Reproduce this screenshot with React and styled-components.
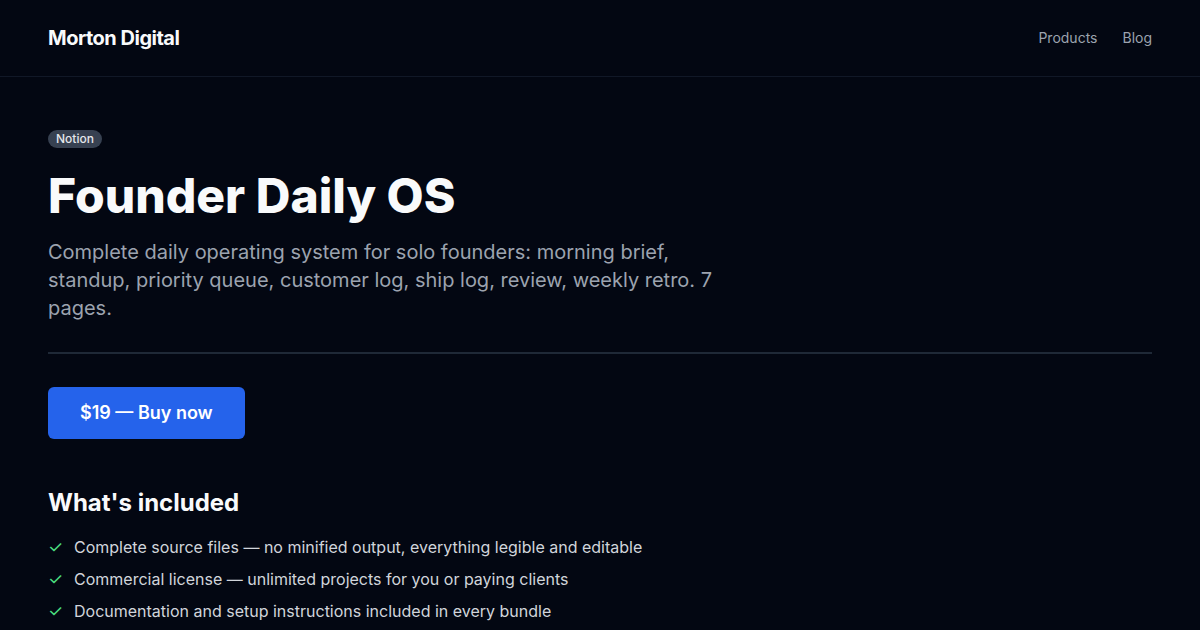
import styled, { createGlobalStyle } from "styled-components";

const GlobalStyle = createGlobalStyle`
  html, body {
    margin: 0;
    padding: 0;
    background: #030712;
  }
  body {
    font-family: Inter, "Noto Sans", sans-serif;
    color: #f9fafb;
    -webkit-font-smoothing: antialiased;
  }
  * {
    box-sizing: border-box;
  }
`;

const Page = styled.div`
  min-height: 100vh;
  background: #030712;
`;

const Header = styled.header`
  height: 77px;
  padding: 0 48px 1px;
  display: flex;
  align-items: center;
  justify-content: space-between;
  border-bottom: 1px solid #111827;
`;

const Logo = styled.a`
  font-size: 20px;
  font-weight: 700;
  letter-spacing: -0.5px;
  color: #f9fafb;
  text-decoration: none;
`;

const Nav = styled.nav`
  display: flex;
  gap: 25px;
`;

const NavLink = styled.a`
  font-size: 14px;
  color: #9ca3af;
  text-decoration: none;
`;

const Main = styled.main`
  padding: 50px 48px 0;
`;

const Badge = styled.span`
  display: inline-block;
  font-size: 12px;
  font-weight: 500;
  line-height: 18px;
  padding: 0 8px;
  border-radius: 999px;
  background: #374151;
  color: #e5e7eb;
`;

const Title = styled.h1`
  margin: 22px 0 0;
  font-size: 48px;
  line-height: 52px;
  font-weight: 800;
  color: #f9fafb;
`;

const Lead = styled.p`
  margin: 16px 0 0;
  max-width: 672px;
  font-size: 20px;
  line-height: 28px;
  color: #9ca3af;
`;

const Divider = styled.hr`
  margin: 30px 0 0;
  border: none;
  border-top: 2px solid #1f2937;
`;

const BuyButton = styled.button`
  margin-top: 33px;
  padding: 14px 32px;
  border: none;
  border-radius: 6px;
  background: #2563eb;
  color: #ffffff;
  font-family: inherit;
  font-size: 18px;
  font-weight: 600;
  line-height: 24px;
  cursor: pointer;
`;

const SectionTitle = styled.h2`
  margin: 48px 0 0;
  font-size: 24px;
  line-height: 32px;
  font-weight: 700;
  color: #f9fafb;
`;

const List = styled.ul`
  margin: 16px 0 0;
  padding: 0;
  list-style: none;
  display: flex;
  flex-direction: column;
  gap: 8px;
`;

const Item = styled.li`
  display: flex;
  align-items: center;
  gap: 12px;
  font-size: 16px;
  line-height: 24px;
  color: #d1d5db;
`;

const Check = styled.span`
  width: 14px;
  color: #4ade80;
  font-size: 17px;
`;

const features = [
  "Complete source files — no minified output, everything legible and editable",
  "Commercial license — unlimited projects for you or paying clients",
  "Documentation and setup instructions included in every bundle",
];

const App = () => {
  return (
    <Page>
      <GlobalStyle />
      <Header>
        <Logo href="#">Morton Digital</Logo>
        <Nav>
          <NavLink href="#">Products</NavLink>
          <NavLink href="#">Blog</NavLink>
        </Nav>
      </Header>
      <Main>
        <Badge>Notion</Badge>
        <Title>Founder Daily OS</Title>
        <Lead>
          Complete daily operating system for solo founders: morning brief,
          standup, priority queue, customer log, ship log, review, weekly
          retro. 7 pages.
        </Lead>
        <Divider />
        <BuyButton>$19 — Buy now</BuyButton>
        <SectionTitle>What's included</SectionTitle>
        <List>
          {features.map((f) => (
            <Item key={f}>
              <Check>✓</Check>
              {f}
            </Item>
          ))}
        </List>
      </Main>
    </Page>
  );
};

export default App;
